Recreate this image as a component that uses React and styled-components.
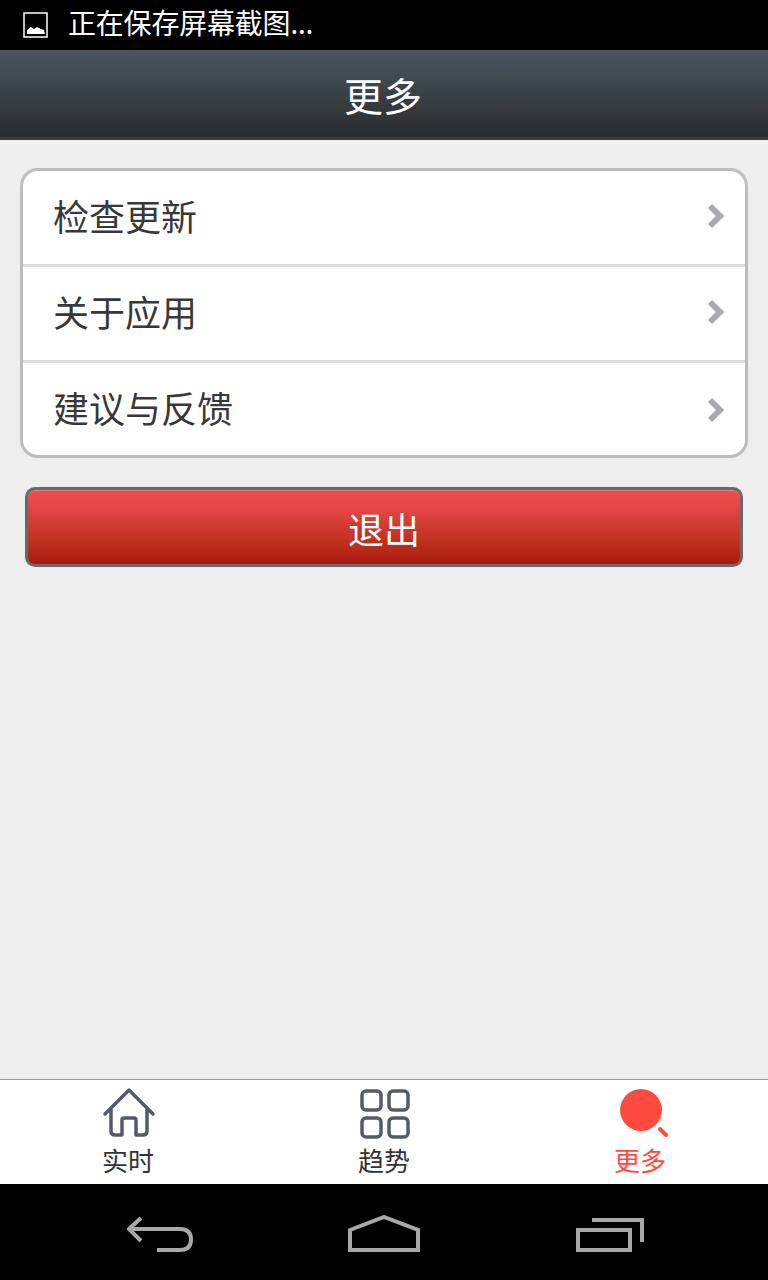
import React from 'react';
import styled, { createGlobalStyle } from 'styled-components';

const GlobalStyle = createGlobalStyle`
  html, body {
    margin: 0;
    padding: 0;
    height: 100%;
  }
  #root {
    height: 100%;
  }
  * {
    box-sizing: border-box;
  }
`;

const FONT = `"Noto Sans CJK SC", "Noto Sans", sans-serif`;

const Page = styled.div`
  width: 768px;
  height: 1280px;
  display: flex;
  flex-direction: column;
  background: #eeeeee;
  font-family: ${FONT};
  overflow: hidden;
`;

const StatusBar = styled.div`
  height: 50px;
  flex: none;
  background: #000;
  color: #fff;
  display: flex;
  align-items: center;
  padding-left: 23px;
  gap: 19px;
  font-size: 28px;
`;

const StatusText = styled.span`
  line-height: 42px;
  margin-bottom: 6px;
  letter-spacing: -0.2px;
`;

const Header = styled.div`
  height: 90px;
  flex: none;
  display: flex;
  align-items: center;
  justify-content: center;
  padding-right: 2px;
  background: linear-gradient(to bottom, #4a5760 0%, #3c464b 40%, #292b2d 100%);
  border-bottom: 3px solid #383c3d;
  color: #fff;
  font-size: 39px;
`;

const Content = styled.div`
  flex: 1;
  padding: 28px 20px 0;
`;

const List = styled.div`
  background: #fff;
  border: 3px solid #bdbdbd;
  border-radius: 18px;
  height: 290px;
  display: flex;
  flex-direction: column;
`;

const Row = styled.div`
  height: ${(p) => p.$height}px;
  display: flex;
  align-items: center;
  justify-content: space-between;
  padding: 0 20px 0 30px;
  color: #383838;
  font-size: 36px;
  & + & {
    border-top: 3px solid #dddddd;
  }
`;

const RowLabel = styled.span`
  margin-bottom: 5px;
`;

const ChevronIcon = styled.svg`
  width: 20px;
  height: 28px;
  display: block;
  margin-right: -1px;
  margin-top: ${(p) => p.$nudge}px;
`;

const LogoutButton = styled.div`
  height: 80px;
  margin: 29px 5px 0;
  border: 3px solid #666a6e;
  border-radius: 10px;
  display: flex;
  align-items: center;
  justify-content: center;
  padding-top: 2px;
  background: linear-gradient(to bottom, #ee4d4d 0%, #e24646 25%, #c0301f 70%, #a81c0e 100%);
  box-shadow: inset 0 1px 0 #f47a7a;
  color: #fff;
  font-size: 36px;
`;

const TabBar = styled.div`
  height: 105px;
  flex: none;
  background: #fff;
  border-top: 1px solid #999;
  display: grid;
  grid-template-columns: repeat(3, 256px);
`;

const Tab = styled.div`
  display: flex;
  flex-direction: column;
  align-items: center;
  padding-top: 7px;
  color: ${(p) => (p.$active ? '#ff4a40' : '#333')};
  font-size: 26px;
  line-height: 34px;
`;

const TabIcon = styled.svg`
  width: 60px;
  height: 56px;
  display: block;
`;

const NavBar = styled.div`
  height: 96px;
  flex: none;
  background: #000;
  display: flex;
  align-items: flex-start;
  padding: 31px 0 0 127px;
  gap: 155px;
`;

const NavIcon = styled.svg`
  height: 38px;
  width: ${(p) => p.$width}px;
  display: block;
`;

const Chevron = ({ nudge }) => (
  <ChevronIcon viewBox="0 0 20 28" $nudge={nudge}>
    <path d="M4 4 L14 14 L4 24" fill="none" stroke="#a9a9ae" strokeWidth="6" strokeLinejoin="miter" />
  </ChevronIcon>
);

const items = [
  { label: '检查更新', height: 93, nudge: -4 },
  { label: '关于应用', height: 96, nudge: -4 },
  { label: '建议与反馈', height: 95, nudge: 2 },
];

function App() {
  return (
    <Page>
      <GlobalStyle />
      <StatusBar>
        <svg width="26" height="26" viewBox="0 0 26 26">
          <rect x="1" y="1" width="23" height="24" fill="none" stroke="#fff" strokeWidth="1.5" />
          <path d="M4 22 L4 18 L8 15 L11 17 L14 15 L18 17 L21 18 L22 22 Z" fill="#fff" />
        </svg>
        <StatusText>正在保存屏幕截图...</StatusText>
      </StatusBar>
      <Header>更多</Header>
      <Content>
        <List>
          {items.map((item) => (
            <Row key={item.label} $height={item.height}>
              <RowLabel>{item.label}</RowLabel>
              <Chevron nudge={item.nudge} />
            </Row>
          ))}
        </List>
        <LogoutButton>退出</LogoutButton>
      </Content>
      <TabBar>
        <Tab>
          <TabIcon viewBox="0 0 60 56">
            <path
              d="M7 27 L31 3 L55 27 M13 22 L13 44 Q13 48 17 48 L24 48 L24 33 Q24 31 26 31 L36 31 Q38 31 38 33 L38 48 L45 48 Q49 48 49 44 L49 22"
              fill="none"
              stroke="#555b66"
              strokeWidth="3.5"
              strokeLinejoin="round"
              strokeLinecap="round"
            />
          </TabIcon>
          实时
        </Tab>
        <Tab>
          <TabIcon viewBox="0 0 60 56">
            <g fill="none" stroke="#555b66" strokeWidth="3.5">
              <rect x="8" y="4" width="19" height="19" rx="4" />
              <rect x="35" y="4" width="19" height="19" rx="4" />
              <rect x="8" y="31" width="19" height="19" rx="4" />
              <rect x="35" y="31" width="19" height="19" rx="4" />
            </g>
          </TabIcon>
          趋势
        </Tab>
        <Tab $active>
          <TabIcon viewBox="0 0 60 56">
            <circle cx="31" cy="23" r="21" fill="#ff4a40" />
            <path d="M50 42 L56 48" stroke="#ff4a40" strokeWidth="4" strokeLinecap="round" />
          </TabIcon>
          更多
        </Tab>
      </TabBar>
      <NavBar>
        <NavIcon viewBox="0 0 66 38" $width={66}>
          <path
            d="M14 3 L2 14 L14 26 M2 14 L53 14 Q64 14 64 24.5 Q64 35 53 35 L30 35"
            fill="none"
            stroke="#a8a8a8"
            strokeWidth="4"
          />
        </NavIcon>
        <NavIcon viewBox="0 0 72 38" $width={72}>
          <path d="M2 15 L36 2 L70 15 L70 35 L2 35 Z" fill="none" stroke="#a8a8a8" strokeWidth="4" />
        </NavIcon>
        <NavIcon viewBox="-1 0 69 38" $width={69}>
          <g fill="none" stroke="#a8a8a8" strokeWidth="4">
            <rect x="2" y="15" width="52" height="20" />
            <path d="M16 5 L66 5 L66 27" />
          </g>
        </NavIcon>
      </NavBar>
    </Page>
  );
}

export default App;
